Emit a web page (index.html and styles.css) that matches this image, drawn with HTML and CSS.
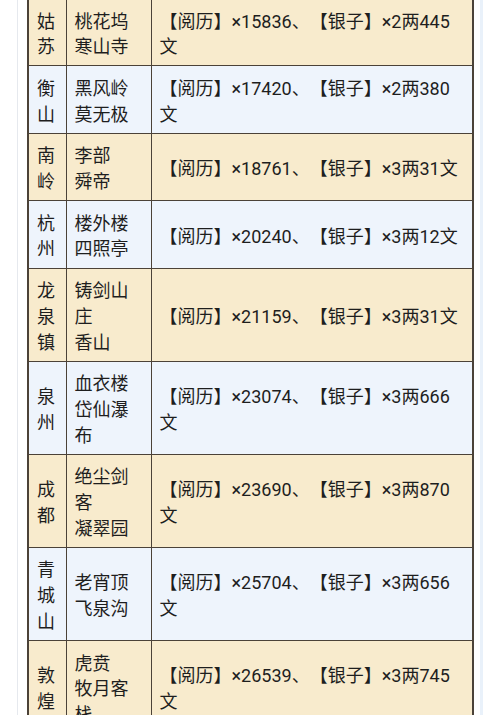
FILE: index.html
```html
<!DOCTYPE html>
<html lang="zh-CN">
<head>
<meta charset="utf-8">
<title>奖励表</title>
<link rel="stylesheet" href="styles.css">
</head>
<body>
<div class="page">
  <table class="rewards">
    <colgroup>
      <col class="c-city">
      <col class="c-place">
      <col class="c-reward">
    </colgroup>
    <tbody>
      <tr class="odd"><td>姑苏</td><td>桃花坞<br>寒山寺</td><td>【阅历】×15836、【银子】×2两445文</td></tr>
      <tr class="even"><td>衡山</td><td>黑风岭<br>莫无极</td><td>【阅历】×17420、【银子】×2两380文</td></tr>
      <tr class="odd"><td>南岭</td><td>李部<br>舜帝</td><td>【阅历】×18761、【银子】×3两31文</td></tr>
      <tr class="even"><td>杭州</td><td>楼外楼<br>四照亭</td><td>【阅历】×20240、【银子】×3两12文</td></tr>
      <tr class="odd"><td>龙泉镇</td><td>铸剑山庄<br>香山</td><td>【阅历】×21159、【银子】×3两31文</td></tr>
      <tr class="even"><td>泉州</td><td>血衣楼<br>岱仙瀑布</td><td>【阅历】×23074、【银子】×3两666文</td></tr>
      <tr class="odd"><td>成都</td><td>绝尘剑客<br>凝翠园</td><td>【阅历】×23690、【银子】×3两870文</td></tr>
      <tr class="even"><td>青城山</td><td>老宵顶<br>飞泉沟</td><td>【阅历】×25704、【银子】×3两656文</td></tr>
      <tr class="odd"><td>敦煌</td><td>虎贲<br>牧月客栈</td><td>【阅历】×26539、【银子】×3两745文</td></tr>
    </tbody>
  </table>
</div>
</body>
</html>
```
FILE: styles.css
```css
html, body {
  margin: 0;
  padding: 0;
  background: #ffffff;
}
body {
  font-family: Roboto, "Noto Sans CJK SC", sans-serif;
  color: #1e1e1e;
}
.page {
  margin: -3px 17px 0 17px;
  padding: 0 9px 0 9px;
  border-left: 1px solid #e6e9ee;
  border-right: 3px solid #e9f1fa;
  min-height: 760px;
}
.rewards {
  width: 445px;
  table-layout: fixed;
  border-collapse: collapse;
  border: 2px solid #4b4238;
  font-size: 18px;
  line-height: 25.7px;
  text-spacing-trim: space-all;
  font-kerning: none;
  font-feature-settings: "halt" 0, "palt" 0;
}
.c-city { width: 38px; }
.c-place { width: 85px; }
.c-reward { width: 322px; }
.rewards td {
  border: 1px solid #4b4238;
  padding: 9.5px 8px 5.5px 8px;
  vertical-align: middle;
  text-align: left;
  word-break: break-all;
}
.rewards tr.odd td { background: #f8ebcd; }
.rewards tr.even td { background: #eef4fc; }
```
